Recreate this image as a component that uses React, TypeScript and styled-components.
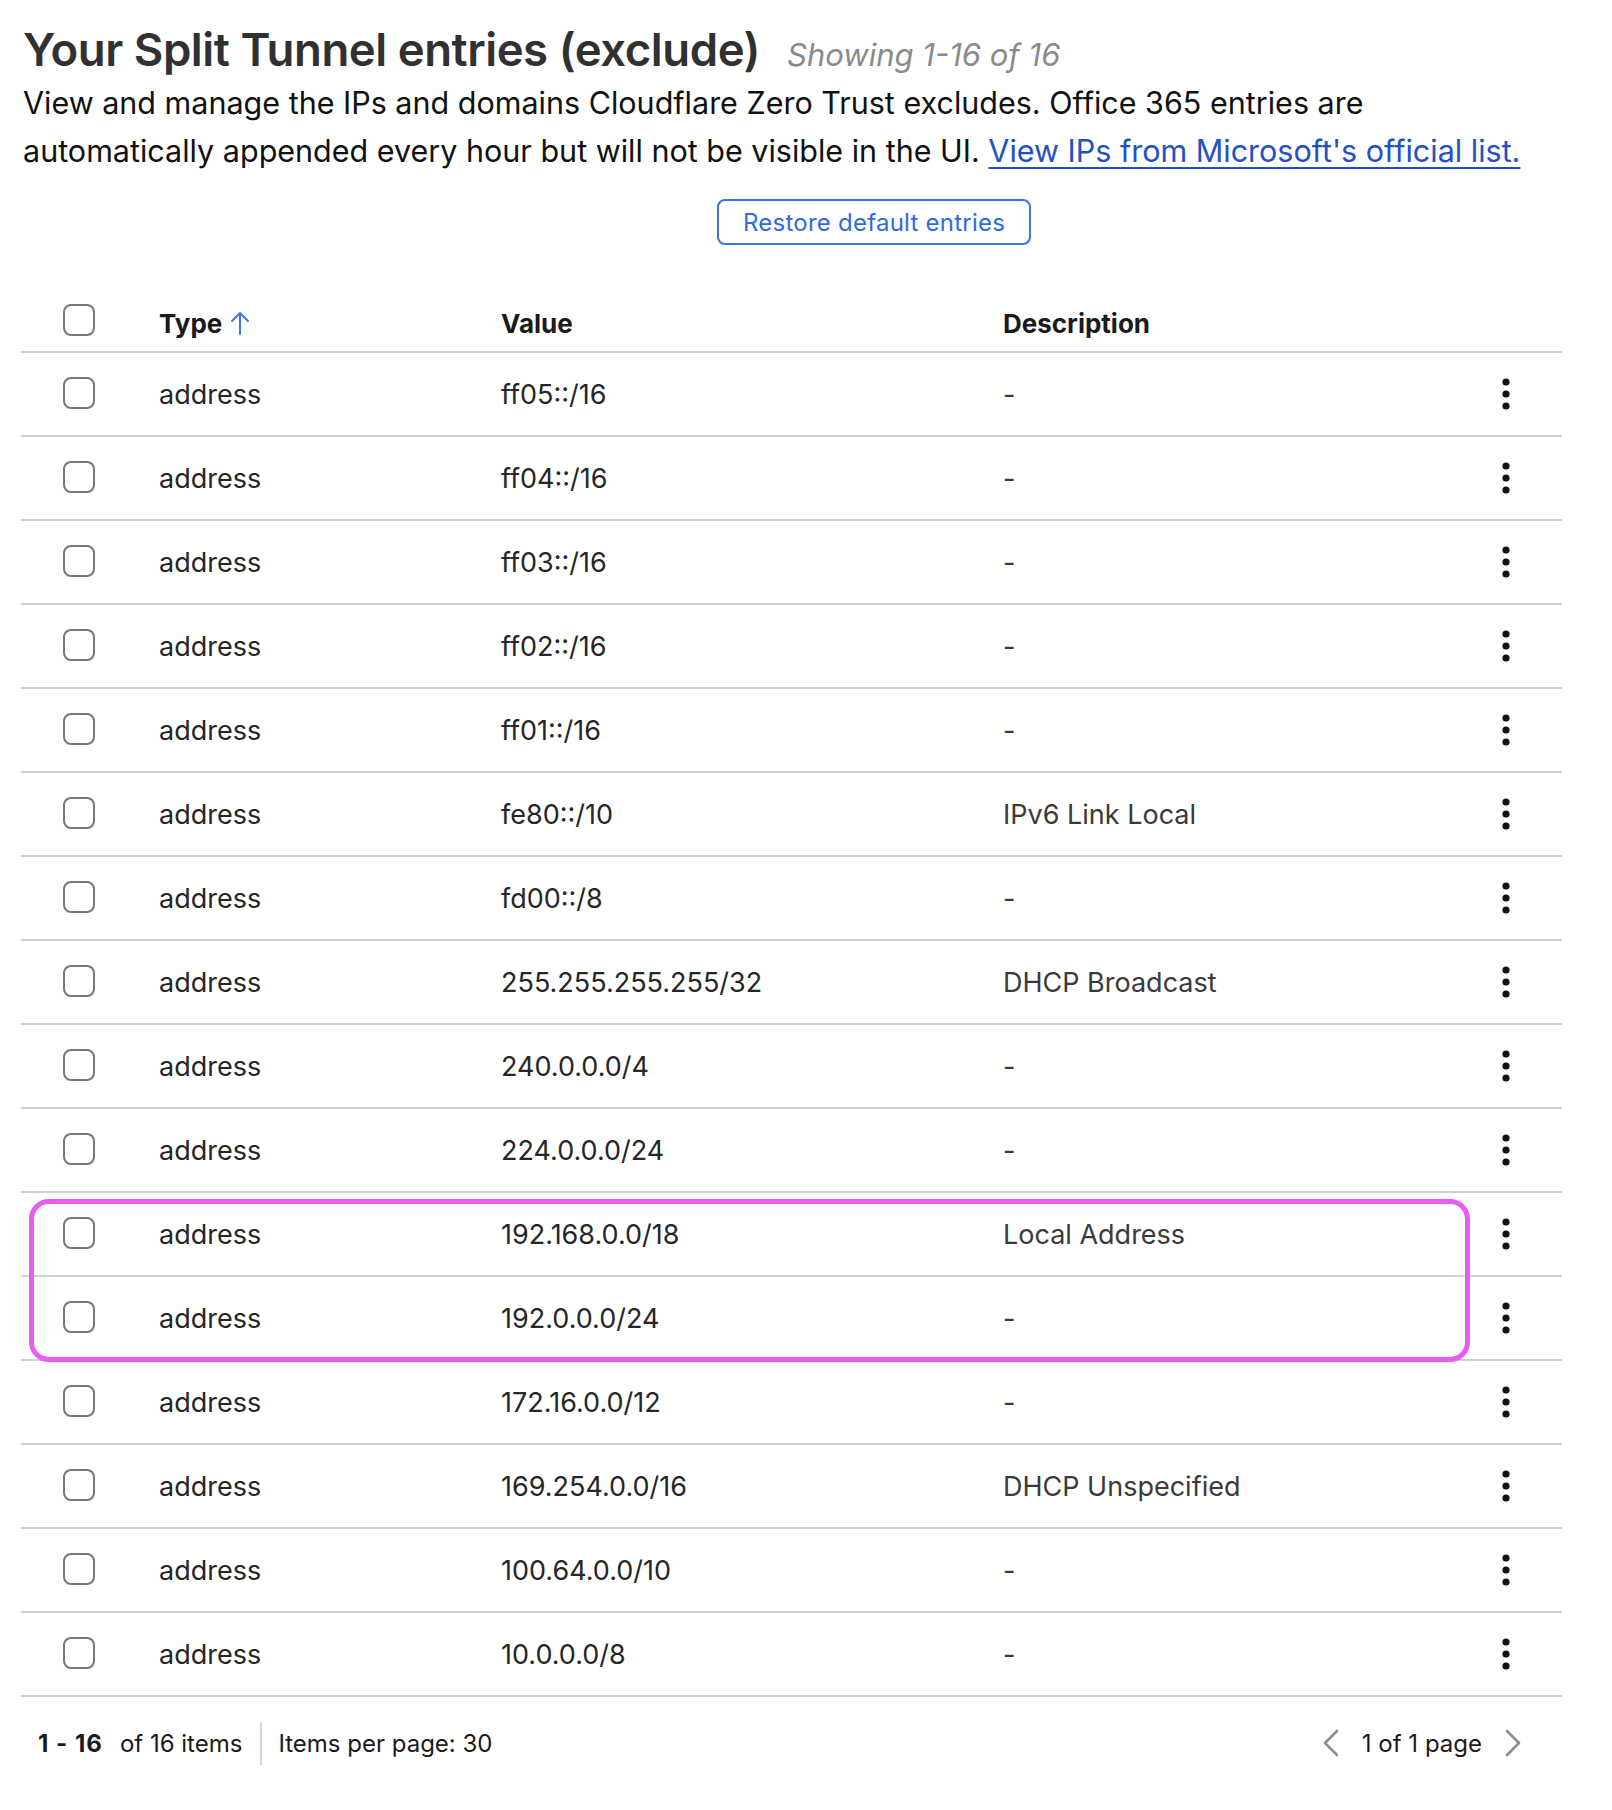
import styled, { createGlobalStyle } from "styled-components";

const GlobalStyle = createGlobalStyle`
  body {
    margin: 0;
    background: #fff;
    font-family: Inter, "Noto Sans", "Liberation Sans", sans-serif;
    color: #1d1d1d;
  }
`;

type Entry = { value: string; description?: string; flagged?: boolean };

const entries: Entry[] = [
  { value: "ff05::/16" },
  { value: "ff04::/16" },
  { value: "ff03::/16" },
  { value: "ff02::/16" },
  { value: "ff01::/16" },
  { value: "fe80::/10", description: "IPv6 Link Local" },
  { value: "fd00::/8" },
  { value: "255.255.255.255/32", description: "DHCP Broadcast" },
  { value: "240.0.0.0/4" },
  { value: "224.0.0.0/24" },
  { value: "192.168.0.0/18", description: "Local Address", flagged: true },
  { value: "192.0.0.0/24", flagged: true },
  { value: "172.16.0.0/12" },
  { value: "169.254.0.0/16", description: "DHCP Unspecified" },
  { value: "100.64.0.0/10" },
  { value: "10.0.0.0/8" },
];

const Page = styled.main`
  width: 1541px;
  padding: 22px 0 0 21px;
`;

const TitleRow = styled.div`
  display: flex;
  align-items: baseline;
  gap: 27px;
  padding-left: 2px;
  height: 57px;
`;

const Title = styled.h1`
  margin: 0;
  font-size: 45.5px;
  line-height: 56px;
  font-weight: 600;
  color: #313131;
  letter-spacing: -0.01em;
`;

const Count = styled.span`
  font-size: 31px;
  font-style: italic;
  color: #8a8a8a;
`;

const Intro = styled.p`
  margin: 0;
  padding-left: 2px;
  font-size: 30.5px;
  line-height: 48px;
  color: #111;
`;

const Link = styled.a`
  color: #2251c6;
  text-decoration: underline;
  text-underline-offset: 5px;
  text-decoration-thickness: 2px;
`;

const Actions = styled.div`
  display: flex;
  padding: 24px 0 0 696px;
`;

const OutlineButton = styled.button`
  height: 46px;
  padding: 0 24px;
  border: 2px solid #3b74ea;
  border-radius: 8px;
  background: #fff;
  color: #2f6ae4;
  font-family: inherit;
  font-size: 24px;
  letter-spacing: 0.01em;
`;

const Table = styled.div`
  margin-top: 50px;
`;

const Row = styled.div<{ $head?: boolean }>`
  display: grid;
  grid-template-columns: 138px 342px 502px 1fr 112px;
  align-items: center;
  height: ${(p) => (p.$head ? "56px" : "82px")};
  border-bottom: 2px solid #d0d0d0;
  font-size: ${(p) => (p.$head ? "26px" : "27px")};
  font-weight: ${(p) => (p.$head ? 700 : 400)};
  color: ${(p) => (p.$head ? "#1a1a1a" : "#262626")};
`;

const Group = styled.div`
  position: relative;
`;

const Highlight = styled.div`
  position: absolute;
  left: 8px;
  right: 92px;
  top: 6px;
  bottom: -1px;
  border: 5px solid #e85cf3;
  border-radius: 20px;
  pointer-events: none;
`;

const CheckCell = styled.div`
  display: flex;
  padding-left: 42px;
`;

const Check = styled.input.attrs({ type: "checkbox" })<{ $up?: boolean }>`
  appearance: none;
  margin: 0;
  width: 32px;
  height: 32px;
  border: 2px solid #777;
  border-radius: 8px;
  background: #fff;
  transform: translateY(${(p) => (p.$up ? "-3px" : "-1px")});
`;

const Cell = styled.div<{ $muted?: boolean }>`
  color: ${(p) => (p.$muted ? "#3a3a3a" : "inherit")};
  white-space: nowrap;
`;

const HeadLabel = styled.span`
  display: inline-flex;
  align-items: center;
  gap: 8px;
`;

const Kebab = styled.button`
  justify-self: center;
  display: flex;
  padding: 0;
  border: 0;
  background: none;
`;

const Footer = styled.div`
  display: flex;
  align-items: center;
  height: 92px;
  padding: 0 40px 0 17px;
  font-size: 24px;
  color: #1a1a1a;
`;

const Range = styled.span`
  font-weight: 700;
  letter-spacing: 1px;
  margin-right: 17px;
`;

const Divider = styled.span`
  width: 2px;
  height: 43px;
  background: #d6d6d6;
  margin: 0 16px 0 18px;
`;

const Pager = styled.div`
  margin-left: auto;
  display: flex;
  align-items: center;
  gap: 22px;
`;

const PageBtn = styled.button`
  display: flex;
  padding: 0;
  border: 0;
  background: none;
`;

const SortArrow = () => (
  <svg width="20" height="24" viewBox="0 0 20 24" fill="none" stroke="#3d74ea" strokeWidth="2" strokeLinecap="round" strokeLinejoin="round">
    <path d="M10 23V2M2 10l8-8 8 8" />
  </svg>
);

const Dots = () => (
  <svg width="10" height="32" viewBox="0 0 10 32" fill="#111">
    <circle cx="5" cy="4" r="3.6" />
    <circle cx="5" cy="16" r="3.6" />
    <circle cx="5" cy="28" r="3.6" />
  </svg>
);

const Chevron = ({ dir }: { dir: "left" | "right" }) => (
  <svg width="18" height="30" viewBox="0 0 18 30" fill="none" stroke="#8c8c8c" strokeWidth="2.6" strokeLinecap="round" strokeLinejoin="round">
    <path d={dir === "left" ? "M15 3L3 15l12 12" : "M3 3l12 12L3 27"} />
  </svg>
);

const EntryRow = ({ entry }: { entry: Entry }) => (
  <Row>
    <CheckCell>
      <Check />
    </CheckCell>
    <Cell>address</Cell>
    <Cell>{entry.value}</Cell>
    <Cell $muted>{entry.description ?? "-"}</Cell>
    <Kebab aria-label="Actions">
      <Dots />
    </Kebab>
  </Row>
);

export default function App() {
  const before = entries.slice(0, 10);
  const flagged = entries.filter((e) => e.flagged);
  const after = entries.slice(12);

  return (
    <>
      <GlobalStyle />
      <Page>
        <TitleRow>
          <Title>Your Split Tunnel entries (exclude)</Title>
          <Count>Showing 1-16 of 16</Count>
        </TitleRow>
        <Intro>
          View and manage the IPs and domains Cloudflare Zero Trust excludes. Office 365 entries are
          <br />
          automatically appended every hour but will not be visible in the UI.{" "}
          <Link href="#">View IPs from Microsoft's official list.</Link>
        </Intro>
        <Actions>
          <OutlineButton>Restore default entries</OutlineButton>
        </Actions>

        <Table>
          <Row $head>
            <CheckCell>
              <Check $up />
            </CheckCell>
            <HeadLabel>
              Type <SortArrow />
            </HeadLabel>
            <Cell>Value</Cell>
            <Cell>Description</Cell>
            <span />
          </Row>
          {before.map((e) => (
            <EntryRow key={e.value} entry={e} />
          ))}
          <Group>
            {flagged.map((e) => (
              <EntryRow key={e.value} entry={e} />
            ))}
            <Highlight />
          </Group>
          {after.map((e) => (
            <EntryRow key={e.value} entry={e} />
          ))}
        </Table>

        <Footer>
          <Range>1 - 16</Range>
          of 16 items
          <Divider />
          Items per page: 30
          <Pager>
            <PageBtn aria-label="Previous page">
              <Chevron dir="left" />
            </PageBtn>
            1 of 1 page
            <PageBtn aria-label="Next page">
              <Chevron dir="right" />
            </PageBtn>
          </Pager>
        </Footer>
      </Page>
    </>
  );
}
